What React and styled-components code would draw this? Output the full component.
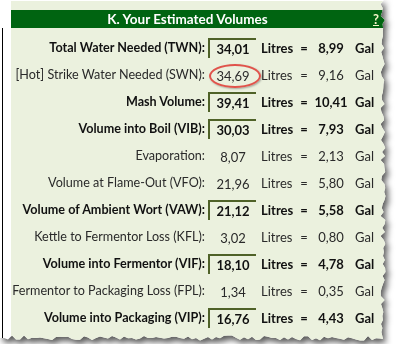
import React from 'react';
import styled, { createGlobalStyle } from 'styled-components';

const GlobalStyle = createGlobalStyle`
  body {
    margin: 0;
    background: #ffffff;
  }
`;

// jagged "torn paper" outline for the right and bottom edges
const makeRand = (seed) => () => {
  seed = (seed * 16807) % 2147483647;
  return seed / 2147483647;
};

const tornEdge = (() => {
  const r = makeRand(11);
  const pts = ['0px 0px', '384px 0px'];
  for (let y = 4; y < 334; y += 4) {
    pts.push(`${(380.5 + r() * 5).toFixed(1)}px ${y}px`);
  }
  pts.push('383px 339px');
  for (let x = 380; x > 0; x -= 4) {
    pts.push(`${x}px ${(335.5 + r() * 5).toFixed(1)}px`);
  }
  pts.push('0px 338px');
  return `polygon(${pts.join(',')})`;
})();

const rows = [
  { label: 'Total Water Needed (TWN):', l: '34,01', g: '8,99', bold: true },
  { label: '[Hot] Strike Water Needed (SWN):', l: '34,69', g: '9,16', circled: true },
  { label: 'Mash Volume:', l: '39,41', g: '10,41', bold: true },
  { label: 'Volume into Boil (VIB):', l: '30,03', g: '7,93', bold: true },
  { label: 'Evaporation:', l: '8,07', g: '2,13' },
  { label: 'Volume at Flame-Out (VFO):', l: '21,96', g: '5,80' },
  { label: 'Volume of Ambient Wort (VAW):', l: '21,12', g: '5,58', bold: true },
  { label: 'Kettle to Fermentor Loss (KFL):', l: '3,02', g: '0,80' },
  { label: 'Volume into Fermentor (VIF):', l: '18,10', g: '4,78', bold: true },
  { label: 'Fermentor to Packaging Loss (FPL):', l: '1,34', g: '0,35' },
  { label: 'Volume into Packaging (VIP):', l: '16,76', g: '4,43', bold: true },
];

const Sheet = styled.div`
  width: 390px;
  height: 344px;
  filter: drop-shadow(3px 4px 3px rgba(0, 0, 0, 0.65));
`;

const Torn = styled.div`
  width: 100%;
  height: 100%;
  display: flex;
  background: #ffffff;
  clip-path: ${tornEdge};
`;

const Gutter = styled.div`
  flex: 0 0 8px;
  margin-left: 2px;
  margin-top: 28px;
  border-left: 1px solid #000000;
`;

const Panel = styled.div`
  flex: 1;
  margin-top: 1px;
  padding-top: 9px;
  background: #ebf1de;
  font-family: Lato, "Liberation Sans", sans-serif;
  font-size: 12.6px;
`;

const Header = styled.div`
  height: 18px;
  display: grid;
  grid-template-columns: 353px 1fr;
  align-items: center;
  background: #006411;
  color: #ffffff;
  font-weight: 700;
  font-size: 13.5px;
`;

const Title = styled.div`
  text-align: center;
`;

const Help = styled.span`
  justify-self: start;
  margin-left: 9px;
  color: #f4f4c8;
  text-decoration: underline;
  font-size: 13px;
`;

const Body = styled.div`
  padding-top: 6px;
`;

const Row = styled.div`
  height: 27px;
  display: grid;
  grid-template-columns: 197px 48px 41px 14px 40px 1fr;
  align-items: center;
  color: ${(p) => (p.$bold ? '#111111' : '#2a2a2a')};
  font-weight: ${(p) => (p.$bold ? 700 : 400)};
`;

const Label = styled.div`
  text-align: right;
  padding-right: 3px;
  white-space: nowrap;
`;

const ValueBox = styled.div`
  position: relative;
  box-sizing: border-box;
  height: 20px;
  display: flex;
  align-items: center;
  justify-content: center;
  border-left: 2px solid ${(p) => (p.$boxed ? '#4f6228' : 'transparent')};
  border-top: 2px solid ${(p) => (p.$boxed ? '#4f6228' : 'transparent')};
  padding-top: 1px;
  font-size: 13px;
`;

const Circle = styled.span`
  position: absolute;
  left: -1px;
  top: -3px;
  width: 52px;
  height: 24px;
  box-sizing: border-box;
  border: 2px solid #e0534b;
  border-radius: 50%;
  box-shadow: 1px 1px 2px rgba(0, 0, 0, 0.3);
`;

const Unit = styled.div`
  padding-left: 5px;
  font-size: 13px;
`;

const Eq = styled.div`
  text-align: center;
  font-size: 13px;
`;

const Gal = styled.div`
  text-align: center;
  font-size: 13px;
`;

const GalUnit = styled.div`
  padding-left: 4px;
  font-size: 13px;
`;

export default function App() {
  return (
    <>
      <GlobalStyle />
      <Sheet>
        <Torn>
          <Gutter />
          <Panel>
            <Header>
              <Title>K. Your Estimated Volumes</Title>
              <Help>?</Help>
            </Header>
            <Body>
              {rows.map((r) => (
                <Row key={r.label} $bold={r.bold}>
                  <Label>{r.label}</Label>
                  <ValueBox $boxed={r.bold}>
                    {r.l}
                    {r.circled && <Circle />}
                  </ValueBox>
                  <Unit>Litres</Unit>
                  <Eq>=</Eq>
                  <Gal>{r.g}</Gal>
                  <GalUnit>Gal</GalUnit>
                </Row>
              ))}
            </Body>
          </Panel>
        </Torn>
      </Sheet>
    </>
  );
}
